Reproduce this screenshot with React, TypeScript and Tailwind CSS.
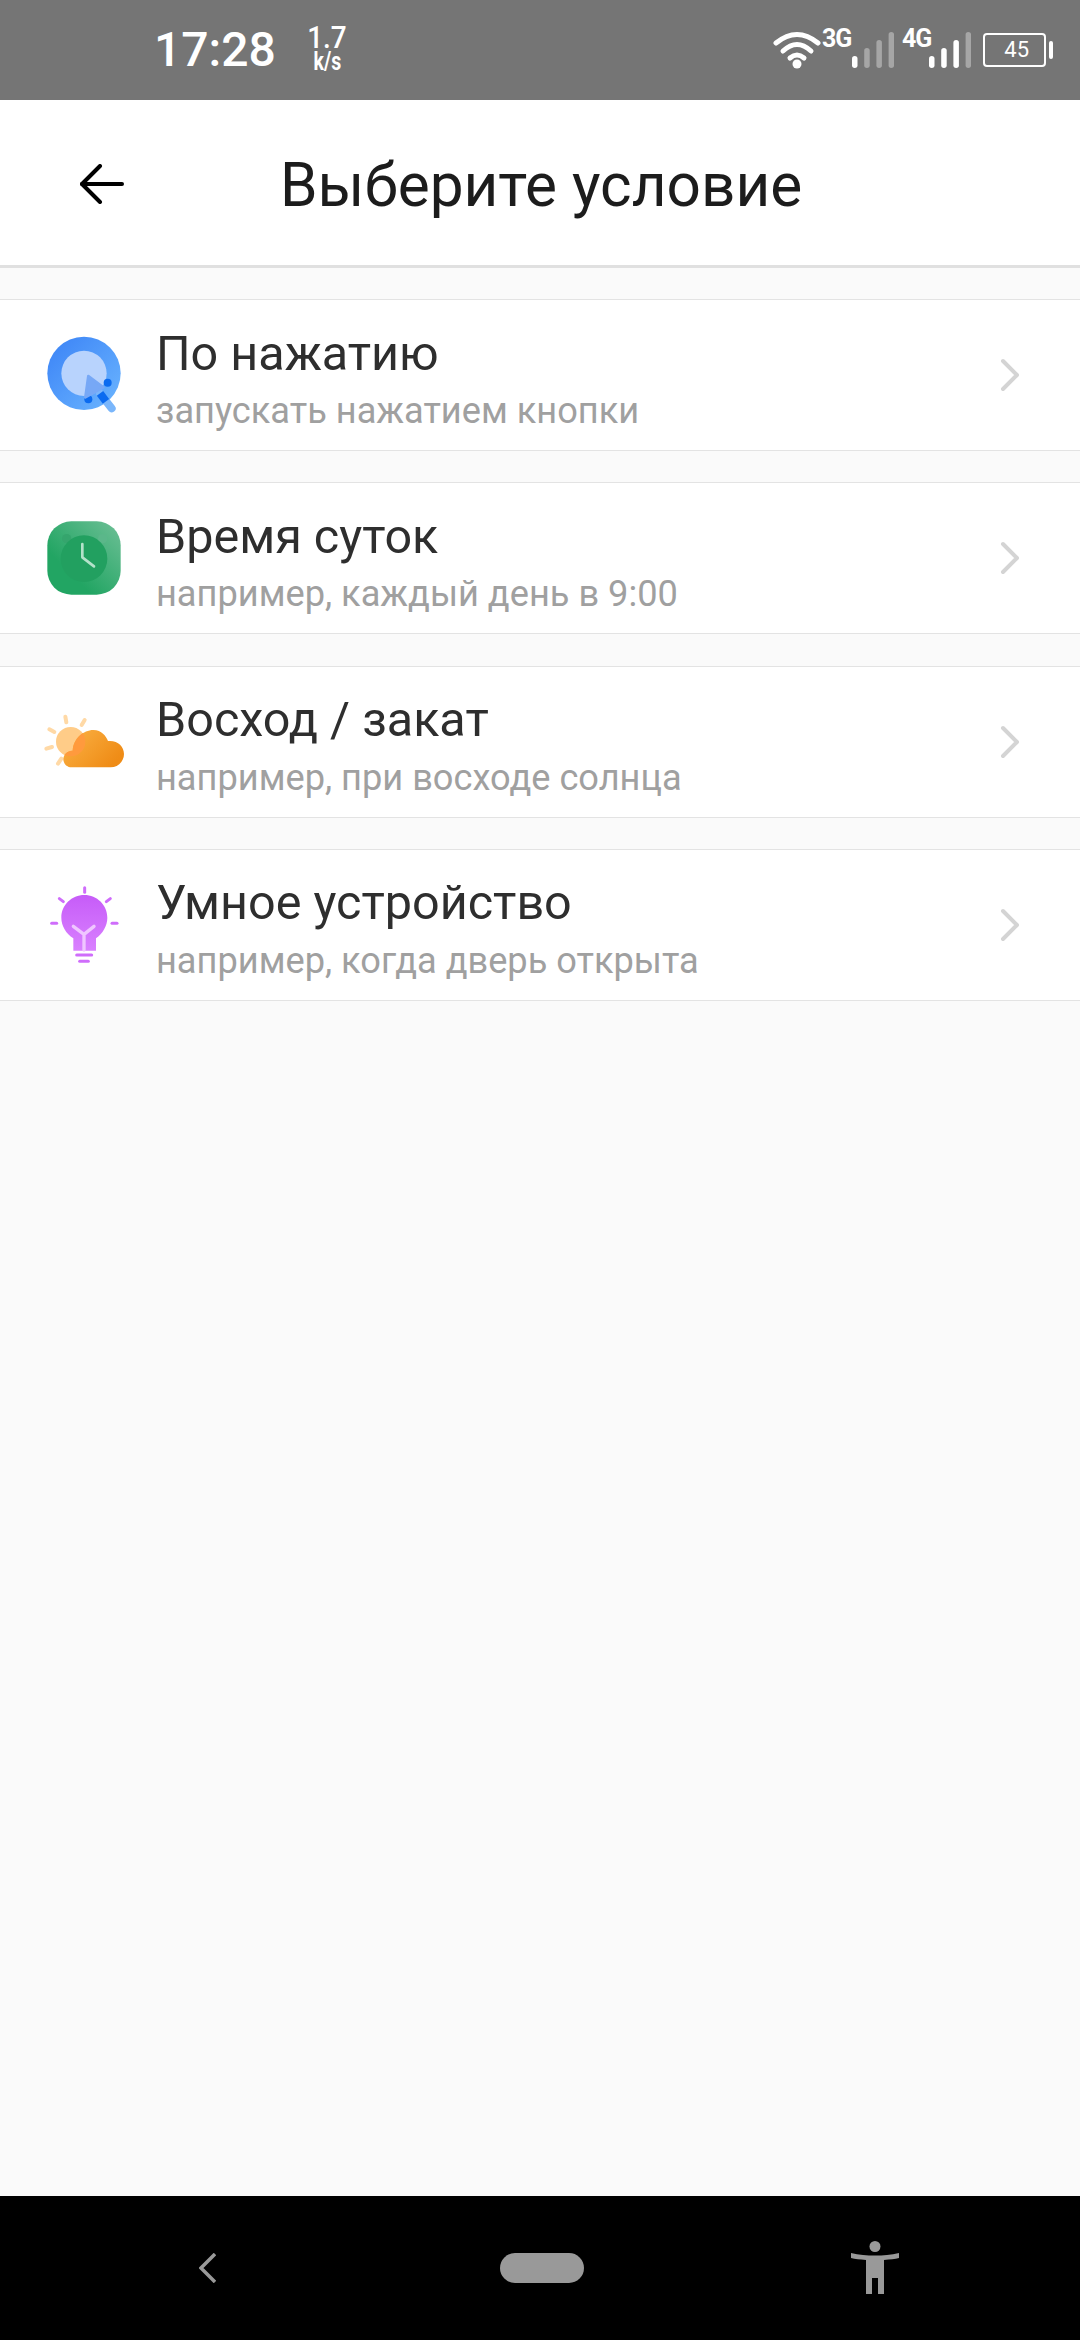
const font = { fontFamily: "Roboto, sans-serif" };

function SignalBars({ active }: { active: number }) {
  const heights = [12, 20, 28, 36];
  return (
    <svg width="42" height="38" viewBox="0 0 42 38" className="block">
      {heights.map((h, i) => (
        <rect
          key={i}
          x={i * 12.2}
          y={37 - h}
          width="5.5"
          height={h}
          rx="2.75"
          fill={i < active ? "#ffffff" : "#a6a6a6"}
        />
      ))}
    </svg>
  );
}

function StatusBar() {
  return (
    <div className="flex h-[100px] shrink-0 items-center bg-[#757575] pl-[154px] text-white">
      <span className="w-[120px] text-[48px] leading-none font-medium">17:28</span>
      <div className="ml-[33px] flex w-[40px] flex-col items-center font-medium">
        <span className="mt-[-3px] h-[24px] origin-top scale-x-90 text-[31px] leading-[24px]">1.7</span>
        <span className="mt-[1px] h-[20px] origin-top scale-x-75 text-[26px] leading-[20px] font-bold">k/s</span>
      </div>
      <svg width="48" height="40" viewBox="0 0 48 40" className="ml-[426px] mt-[-2px] block" fill="none" stroke="#ffffff" strokeLinecap="round">
        <path d="M3 14 Q24 -3 45 14" strokeWidth="5" />
        <path d="M10 22 Q24 9 38 22" strokeWidth="5" />
        <path d="M17 29 Q24 23 31 29" strokeWidth="5" />
        <circle cx="24" cy="35" r="4.5" fill="#ffffff" stroke="none" />
      </svg>
      <span className="mt-[-24px] w-[31px] pl-[1px] text-[25px] leading-none font-bold tracking-[-1px]">3G</span>
      <SignalBars active={1} />
      <span className="mt-[-24px] ml-[8px] w-[27px] text-[25px] leading-none font-bold tracking-[-1px]">4G</span>
      <SignalBars active={3} />
      <div className="ml-[12px] flex h-[34px] w-[63px] items-center justify-end rounded-[4px] border-2 border-white pr-[15px] text-[22px] leading-none">
        45
      </div>
      <div className="ml-[3px] h-[18px] w-[4px] rounded-full bg-white" />
    </div>
  );
}

function Header() {
  return (
    <div className="flex h-[168px] shrink-0 items-center border-b-[3px] border-[#e0e0e0] bg-white pl-[80px]">
      <svg width="44" height="40" viewBox="0 0 44 40" fill="none" stroke="#000000" strokeWidth="4" strokeLinecap="round" strokeLinejoin="round" className="mt-[2px] block">
        <path d="M2 20 H42" />
        <path d="M20 2 L2 20 L20 38" />
      </svg>
      <h1 className="ml-[156px] mt-[7px] text-[60.3px] leading-none font-normal text-[#1c1c1c]">Выберите условие</h1>
    </div>
  );
}

function TapIcon() {
  return (
    <svg width="90" height="90" viewBox="57 60 270 270" className="block shrink-0">
      <defs>
        <linearGradient id="tap" x1="0" y1="0" x2="1" y2="1">
          <stop offset="0" stopColor="#3a82f6" />
          <stop offset="1" stopColor="#6cb6ff" />
        </linearGradient>
      </defs>
      <circle cx="192" cy="190" r="110" fill="url(#tap)" />
      <circle cx="192" cy="190" r="68" fill="#b8d3fd" />
      <circle cx="263" cy="218" r="12" fill="#0b6bf0" />
      <circle cx="205" cy="268" r="12" fill="#0b6bf0" />
      <path d="M240 250 L275 295" stroke="#7ab6fb" strokeWidth="24" strokeLinecap="round" />
      <path d="M240 250 L258 274" stroke="#0b6bf0" strokeWidth="24" />
      <path d="M205 198 L250 232 L196 262 Z" fill="#77a8f6" stroke="#77a8f6" strokeWidth="8" strokeLinejoin="round" />
    </svg>
  );
}

function ClockIcon() {
  return (
    <svg width="90" height="90" viewBox="57 55 270 270" className="block shrink-0">
      <defs>
        <linearGradient id="clock" x1="0" y1="1" x2="1" y2="0">
          <stop offset="0.3" stopColor="#22a563" />
          <stop offset="1" stopColor="#6fc097" />
        </linearGradient>
      </defs>
      <rect x="82" y="80" width="220" height="220" rx="72" fill="url(#clock)" />
      <circle cx="140" cy="132" r="14" fill="#35a56d" />
      <circle cx="248" cy="132" r="14" fill="#5bb78a" />
      <circle cx="192" cy="192" r="70" fill="#22a060" />
      <path d="M187 148 V188 L222 215" fill="none" stroke="#b4e2ca" strokeWidth="8" strokeLinecap="round" strokeLinejoin="round" />
    </svg>
  );
}

const cloudPath =
  "M155 262 C138 262 130 248 130 238 C130 224 142 212 158 212 C160 176 190 150 220 150 C245 150 258 168 264 183 C292 180 312 198 312 222 C312 244 294 262 272 262 Z";

function SunIcon() {
  return (
    <svg width="90" height="90" viewBox="57 51 270 270" className="block shrink-0">
      <defs>
        <linearGradient id="cloud" x1="0" y1="0" x2="1" y2="0.6">
          <stop offset="0" stopColor="#fbb347" />
          <stop offset="1" stopColor="#ef8c16" />
        </linearGradient>
        <clipPath id="sunclip">
          <circle cx="152" cy="185" r="44" />
        </clipPath>
      </defs>
      <g stroke="#ffd9a6" strokeWidth="12" strokeLinecap="round">
        <path d="M136 110 L139 127" />
        <path d="M194 120 L185 135" />
        <path d="M88 148 L103 156" />
        <path d="M79 206 L96 201" />
        <path d="M114 251 L124 236" />
      </g>
      <circle cx="152" cy="185" r="44" fill="#ffcc88" />
      <path d={cloudPath} fill="url(#cloud)" />
      <path d={cloudPath} fill="#ff9a3d" clipPath="url(#sunclip)" />
    </svg>
  );
}

function BulbIcon() {
  return (
    <svg width="90" height="90" viewBox="57 63 270 270" className="block shrink-0">
      <defs>
        <linearGradient id="bulb" x1="0" y1="0" x2="0" y2="1">
          <stop offset="0" stopColor="#c65cf8" />
          <stop offset="1" stopColor="#d981ff" />
        </linearGradient>
      </defs>
      <g stroke="#cf6dfb" strokeWidth="9" strokeLinecap="round">
        <path d="M194 86 V100" />
        <path d="M118 119 L130 128" />
        <path d="M271 119 L259 128" />
        <path d="M95 193 H110" />
        <path d="M276 193 H291" />
        <path d="M170 288 H215" />
        <path d="M179 307 H205" />
      </g>
      <path d="M160 275 V238 C138 224 124 200 124 176 C124 138 155 108 193 108 C231 108 262 138 262 176 C262 200 248 224 228 238 V275 Z" fill="url(#bulb)" />
      <path d="M160 202 L192 226 L222 202 M192 226 V273" fill="none" stroke="#efc6ff" strokeWidth="10" strokeLinecap="round" strokeLinejoin="round" />
    </svg>
  );
}

const rows = [
  { title: "По нажатию", sub: "запускать нажатием кнопки", icon: <TapIcon /> },
  { title: "Время суток", sub: "например, каждый день в 9:00", icon: <ClockIcon /> },
  { title: "Восход / закат", sub: "например, при восходе солнца", icon: <SunIcon /> },
  { title: "Умное устройство", sub: "например, когда дверь открыта", icon: <BulbIcon /> },
];

function Row({ title, sub, icon }: { title: string; sub: string; icon: React.ReactNode }) {
  return (
    <div className="flex h-[152px] items-center border-y border-[#e3e3e3] bg-white pl-[39px] pr-[60px]">
      {icon}
      <div className="ml-[27px] flex-1 pt-[7.5px]">
        <div className="text-[48.5px] leading-[54px] text-[#2e2e2e]">{title}</div>
        <div className="mt-[10.5px] text-[36.2px] leading-[40px] text-[#a0a0a0]">{sub}</div>
      </div>
      <svg width="20" height="34" viewBox="0 0 20 34" fill="none" stroke="#d4d4d4" strokeWidth="4" strokeLinecap="round" strokeLinejoin="round" className="block">
        <path d="M3 3 L17 17 L3 31" />
      </svg>
    </div>
  );
}

function NavBar() {
  return (
    <div className="flex h-[144px] shrink-0 items-center bg-black pl-[199px]">
      <svg width="17" height="30" viewBox="0 0 17 30" fill="none" stroke="#999999" strokeWidth="3.5" className="block">
        <path d="M16 1 L2 15 L16 29" />
      </svg>
      <div className="ml-[284px] h-[30px] w-[84px] rounded-[15px] bg-[#999999]" />
      <svg width="48" height="54" viewBox="0 0 48 54" fill="#999999" className="ml-[267px] block">
        <ellipse cx="24" cy="5.5" rx="5.5" ry="5.5" />
        <path d="M0 12 C8 14 16 14.5 24 14.5 C32 14.5 40 14 48 12 L48 17 C44 18 39 18.5 33 19 L33 53 L27 53 L27 37 L21 37 L21 53 L15 53 L15 19 C9 18.5 4 18 0 17 Z" />
      </svg>
    </div>
  );
}

export default function App() {
  return (
    <div className="flex h-[2340px] w-[1080px] flex-col overflow-hidden bg-[#fafafa]" style={font}>
      <StatusBar />
      <Header />
      <main className="flex flex-1 flex-col gap-[31.33px] pt-[31px]">
        {rows.map((r) => (
          <Row key={r.title} title={r.title} sub={r.sub} icon={r.icon} />
        ))}
      </main>
      <NavBar />
    </div>
  );
}
